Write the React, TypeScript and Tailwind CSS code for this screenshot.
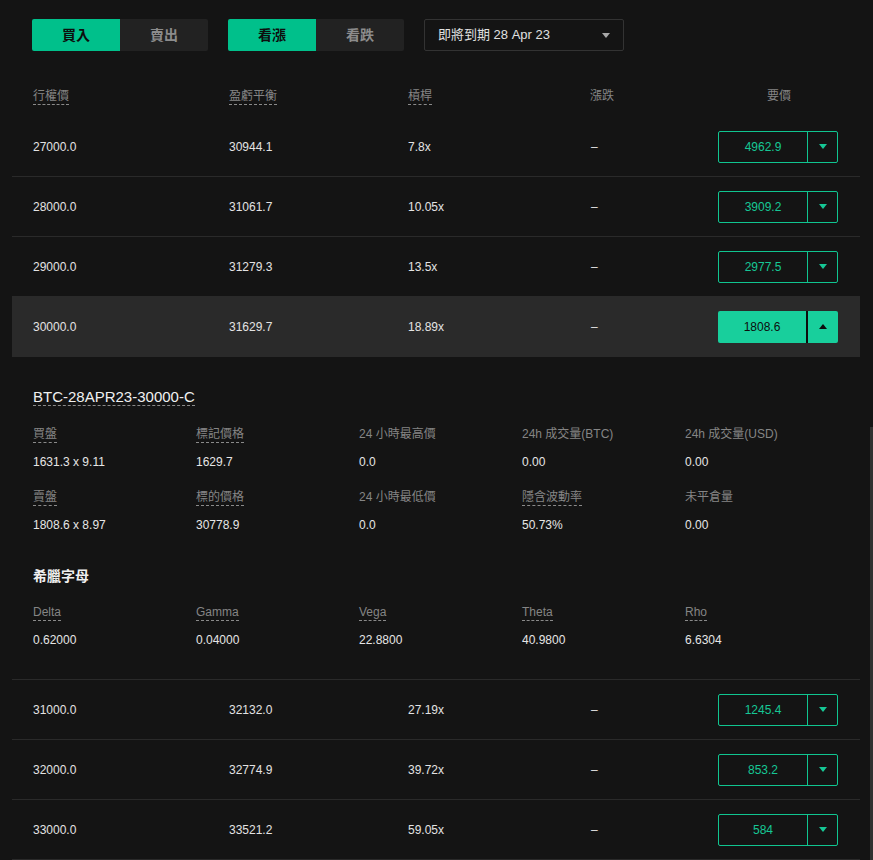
import React from 'react';

const FONT = { fontFamily: '"Liberation Sans", "Noto Sans CJK TC", sans-serif' };

type Row = { strike: string; be: string; lev: string; ask: string; open?: boolean };

const rowsTop: Row[] = [
  { strike: '27000.0', be: '30944.1', lev: '7.8x', ask: '4962.9' },
  { strike: '28000.0', be: '31061.7', lev: '10.05x', ask: '3909.2' },
  { strike: '29000.0', be: '31279.3', lev: '13.5x', ask: '2977.5' },
  { strike: '30000.0', be: '31629.7', lev: '18.89x', ask: '1808.6', open: true },
];

const rowsBottom: Row[] = [
  { strike: '31000.0', be: '32132.0', lev: '27.19x', ask: '1245.4' },
  { strike: '32000.0', be: '32774.9', lev: '39.72x', ask: '853.2' },
  { strike: '33000.0', be: '33521.2', lev: '59.05x', ask: '584' },
];

const Tab = ({ label, active = false, side }: { label: string; active?: boolean; side: 'l' | 'r' }) => (
  <button
    className={`w-[88px] h-8 text-[14px] font-semibold ${side === 'l' ? 'rounded-l-[2px]' : 'rounded-r-[2px]'}
      ${active ? 'bg-[#00c08b] text-[#0d0d0d]' : 'bg-[#222222] text-[#8c8c8c]'}`}
  >
    {label}
  </button>
);

const Caret = ({ up = false, color }: { up?: boolean; color: string }) => (
  <svg width="8" height="5" viewBox="0 0 8 5">
    <path d={up ? 'M0 5 L4 0 L8 5 Z' : 'M0 0 L8 0 L4 5 Z'} fill={color} />
  </svg>
);

const Label = ({ text, dashed = false }: { text: string; dashed?: boolean }) => (
  <span
    className={`block leading-4 text-[12px] text-[#858585] border-b border-dashed ${dashed ? 'border-[#8a8a8a]' : 'border-transparent'}`}
  >
    {text}
  </span>
);

const AskButton = ({ value, open = false }: { value: string; open?: boolean }) =>
  open ? (
    <div className="flex w-[120px] h-8 rounded-[2px] bg-[#18cf9c] text-[12px] text-[#0d0d0d]">
      <div className="w-[90px] flex items-center justify-center border-r-2 border-[#0d0d0d]">{value}</div>
      <div className="flex-1 flex items-center justify-center">
        <Caret up color="#0d0d0d" />
      </div>
    </div>
  ) : (
    <div className="flex w-[120px] h-8 rounded-[2px] border border-[#10c590] text-[12px] text-[#16c795]">
      <div className="w-[89px] flex items-center justify-center border-r border-[#10c590]">{value}</div>
      <div className="flex-1 flex items-center justify-center">
        <Caret color="#16c795" />
      </div>
    </div>
  );

const OptionRow = ({ r }: { r: Row }) => (
  <div
    className={`flex items-center h-[60px] pl-[21px] pr-[22px] text-[12px] text-[#e3e3e3] border-b ${r.open ? 'bg-[#2a2a2a] border-transparent' : 'border-[#2a2a2a]'}`}
  >
    <div className="w-[196px]">{r.strike}</div>
    <div className="w-[179px]">{r.be}</div>
    <div className="w-[183px]">{r.lev}</div>
    <div className="flex-1">–</div>
    <AskButton value={r.ask} open={r.open} />
  </div>
);

const Stat = ({ label, value, dashed = false }: { label: string; value: string; dashed?: boolean }) => (
  <div className="flex flex-col items-start">
    <Label text={label} dashed={dashed} />
    <span className="mt-[11px] leading-4 text-[12px] text-[#e6e6e6]">{value}</span>
  </div>
);

export default function App() {
  return (
    <div className="relative w-[873px] h-[860px] overflow-hidden bg-[#141414]" style={FONT}>
      <div className="pt-[19px] pl-8 flex items-center">
        <Tab label="買入" active side="l" />
        <Tab label="賣出" side="r" />
        <div className="ml-5 flex">
          <Tab label="看漲" active side="l" />
          <Tab label="看跌" side="r" />
        </div>
        <div className="ml-5 w-[200px] h-8 flex items-center justify-between pl-[13px] pr-[13px] border border-[#333333] rounded-[2px] text-[13px] text-[#e0e0e0]">
          <span>即將到期 28 Apr 23</span>
          <Caret color="#a8a8a8" />
        </div>
      </div>

      <div className="flex items-start pt-[37px] pb-3 pl-[33px] pr-[34px]">
        <div className="w-[196px] flex"><Label text="行權價" dashed /></div>
        <div className="w-[179px] flex"><Label text="盈虧平衡" dashed /></div>
        <div className="w-[182px] flex"><Label text="槓桿" dashed /></div>
        <div className="flex-1 flex"><Label text="漲跌" /></div>
        <div className="w-[120px] flex justify-center"><Label text="要價" /></div>
      </div>

      <div className="mx-3 w-[848px]">
        {rowsTop.map((r) => (
          <OptionRow key={r.strike} r={r} />
        ))}

        <div className="flex flex-col items-start pt-8 pb-[31px] pl-[21px] border-b border-[#2a2a2a]">
          <span className="block leading-4 text-[15px] font-medium text-[#f0f0f0] border-b border-dashed border-[#8a8a8a]">
            BTC-28APR23-30000-C
          </span>
          <div className="mt-5 grid grid-cols-5 w-[815px] gap-y-[19px]">
            <Stat label="買盤" value="1631.3 x 9.11" dashed />
            <Stat label="標記價格" value="1629.7" dashed />
            <Stat label="24 小時最高價" value="0.0" />
            <Stat label="24h 成交量(BTC)" value="0.00" />
            <Stat label="24h 成交量(USD)" value="0.00" />
            <Stat label="賣盤" value="1808.6 x 8.97" dashed />
            <Stat label="標的價格" value="30778.9" dashed />
            <Stat label="24 小時最低價" value="0.0" />
            <Stat label="隱含波動率" value="50.73%" dashed />
            <Stat label="未平倉量" value="0.00" />
          </div>
          <div className="mt-[35px] leading-4 text-[14px] font-bold text-[#f0f0f0]">希臘字母</div>
          <div className="mt-5 grid grid-cols-5 w-[815px]">
            <Stat label="Delta" value="0.62000" dashed />
            <Stat label="Gamma" value="0.04000" dashed />
            <Stat label="Vega" value="22.8800" dashed />
            <Stat label="Theta" value="40.9800" dashed />
            <Stat label="Rho" value="6.6304" dashed />
          </div>
        </div>

        {rowsBottom.map((r) => (
          <OptionRow key={r.strike} r={r} />
        ))}
      </div>

      <div className="absolute right-0 top-[427px] w-[3px] h-[433px] bg-[#303030]" />
    </div>
  );
}
